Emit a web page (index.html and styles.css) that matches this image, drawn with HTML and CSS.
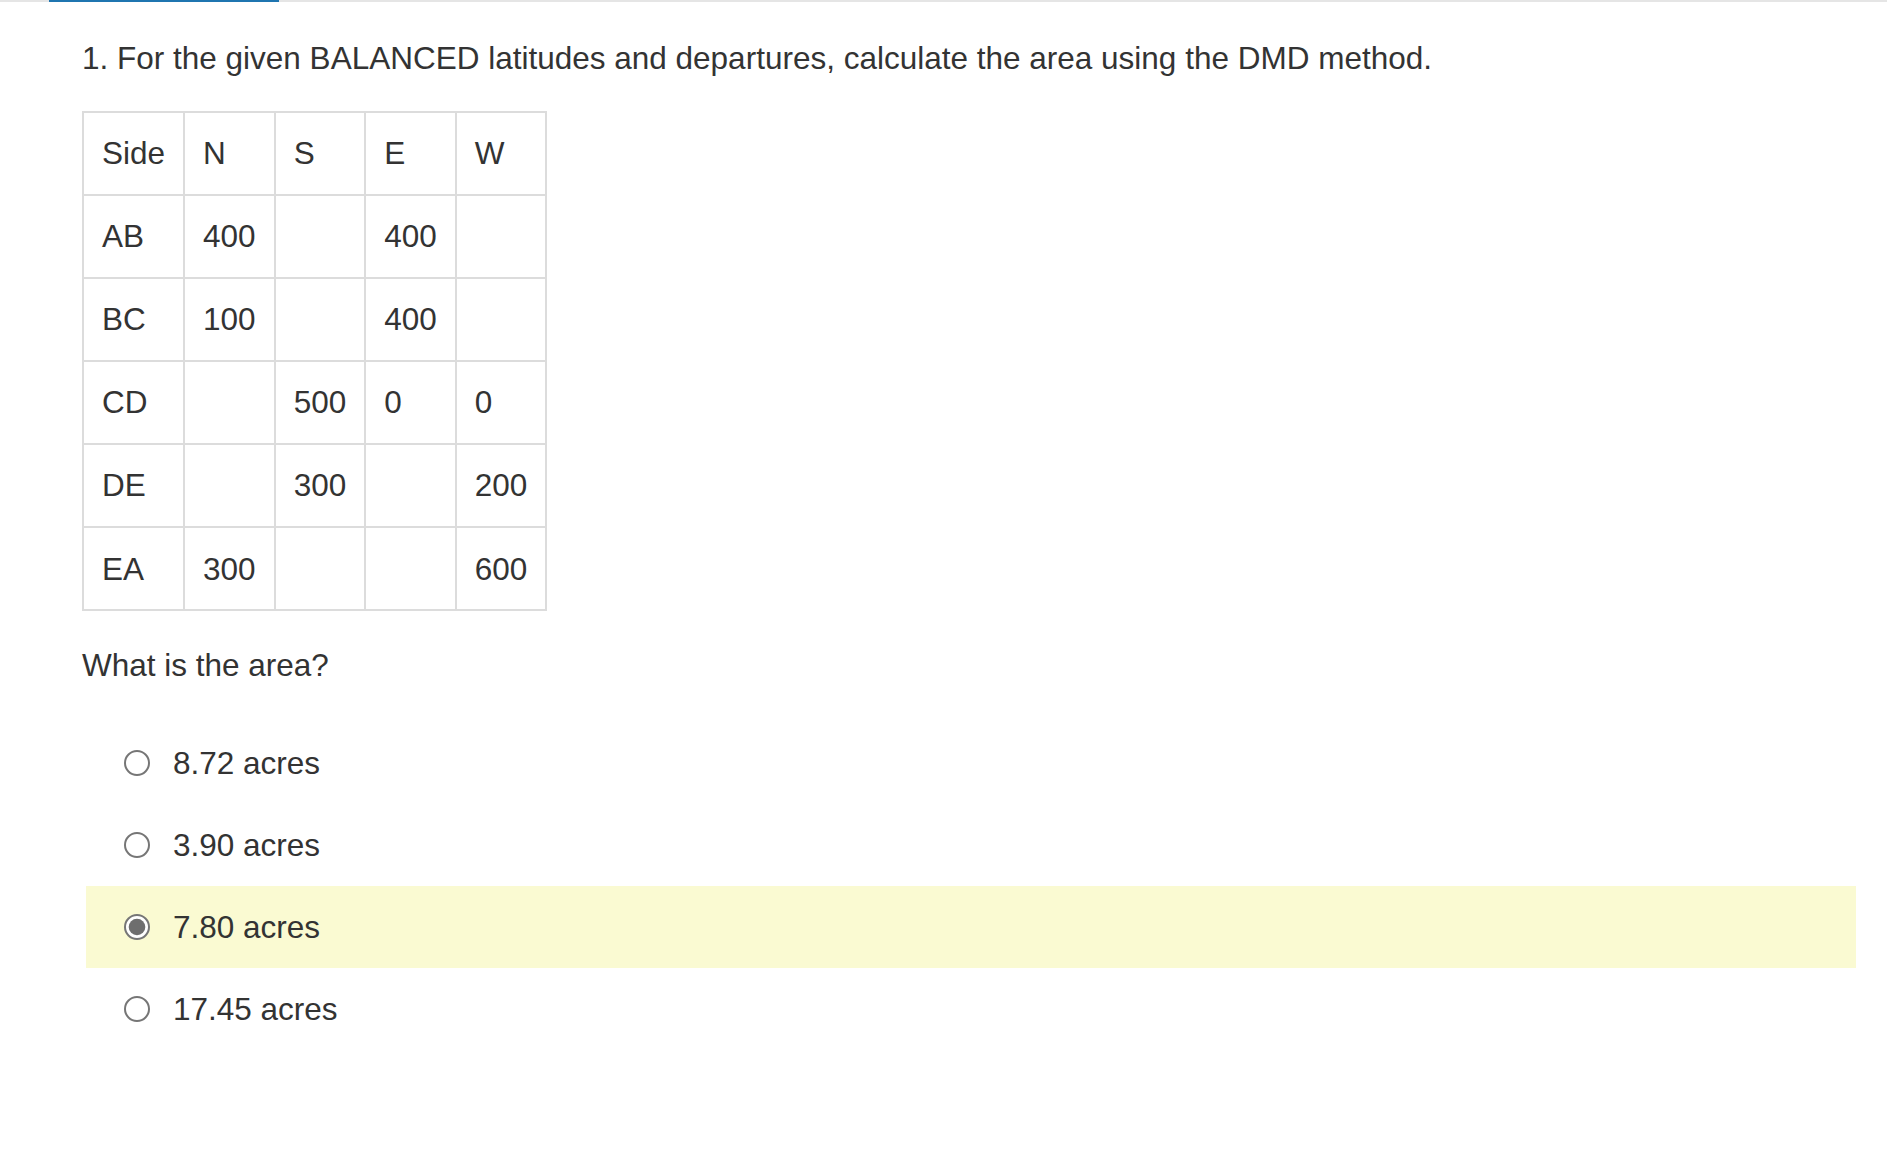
FILE: index.html
```html
<!DOCTYPE html>
<html lang="en">
<head>
<meta charset="utf-8">
<title>Question 1</title>
<link rel="stylesheet" href="styles.css">
</head>
<body>
<div class="progress"><div class="progress-fill"></div></div>
<div class="content">
  <p class="question">1. For the given BALANCED latitudes and departures, calculate the area using the DMD method.</p>
  <table class="data">
    <tr><td class="first">Side</td><td>N</td><td>S</td><td>E</td><td>W</td></tr>
    <tr><td class="first">AB</td><td>400</td><td></td><td>400</td><td></td></tr>
    <tr><td class="first">BC</td><td>100</td><td></td><td>400</td><td></td></tr>
    <tr><td class="first">CD</td><td></td><td>500</td><td>0</td><td>0</td></tr>
    <tr><td class="first">DE</td><td></td><td>300</td><td></td><td>200</td></tr>
    <tr><td class="first">EA</td><td>300</td><td></td><td></td><td>600</td></tr>
  </table>
  <p class="prompt">What is the area?</p>
  <div class="options">
    <div class="option">
      <svg class="radio" width="26" height="26" viewBox="0 0 26 26"><circle cx="13" cy="13" r="12" fill="#fff" stroke="#767676" stroke-width="2"/></svg>
      <span>8.72 acres</span>
    </div>
    <div class="option">
      <svg class="radio" width="26" height="26" viewBox="0 0 26 26"><circle cx="13" cy="13" r="12" fill="#fff" stroke="#767676" stroke-width="2"/></svg>
      <span>3.90 acres</span>
    </div>
    <div class="option selected">
      <svg class="radio" width="26" height="26" viewBox="0 0 26 26"><circle cx="13" cy="13" r="12" fill="#fff" stroke="#767676" stroke-width="2"/><circle cx="13" cy="13" r="8.3" fill="#6e6e6e"/></svg>
      <span>7.80 acres</span>
    </div>
    <div class="option">
      <svg class="radio" width="26" height="26" viewBox="0 0 26 26"><circle cx="13" cy="13" r="12" fill="#fff" stroke="#767676" stroke-width="2"/></svg>
      <span>17.45 acres</span>
    </div>
  </div>
</div>
</body>
</html>
```

FILE: styles.css
```css
html, body {
  margin: 0;
  padding: 0;
  background: #ffffff;
}

body {
  font-family: "Liberation Sans", Arial, sans-serif;
  font-size: 31.5px;
  line-height: 44.1px;
  color: #333333;
}

.progress {
  height: 2px;
  background: #e5e5e5;
}

.progress-fill {
  margin-left: 49px;
  width: 230px;
  height: 2px;
  background: #1f75b0;
}

.content {
  padding: 0 31px 0 82px;
}

.question {
  margin: 34px 0 0 0;
}

.data {
  margin-top: 30.5px;
  border-collapse: collapse;
}

.data td {
  border: 2px solid #dcdcdc;
  padding: 18.5px 18px;
  width: 52.6px;
  text-align: left;
  vertical-align: middle;
}

.data td.first {
  width: 63px;
}

.prompt {
  margin: 32px 0 0 0;
}

.options {
  margin: 34.5px 0 0 4px;
}

.option {
  height: 82px;
  display: flex;
  align-items: center;
  padding-left: 38px;
  gap: 23px;
}

.option.selected {
  background: #fafad2;
}

.radio {
  flex: none;
  display: block;
}
```
